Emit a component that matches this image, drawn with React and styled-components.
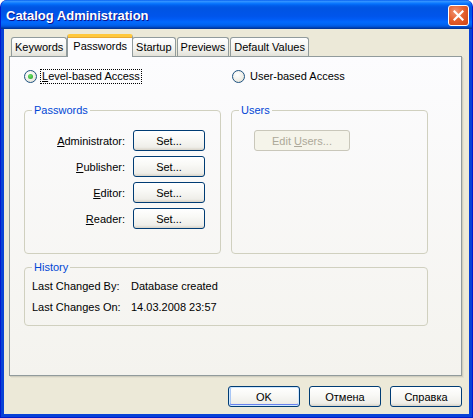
import React from 'react';
import styled, { createGlobalStyle, css } from 'styled-components';

const GlobalStyle = createGlobalStyle`
  html, body {
    margin: 0;
    padding: 0;
    background: #ffffff;
  }
  body {
    font-family: "Liberation Sans", Arial, sans-serif;
    font-size: 11px;
    color: #000;
  }
`;

const Window = styled.div`
  width: 473px;
  height: 418px;
  box-sizing: border-box;
  display: flex;
  flex-direction: column;
  background: #0842d6;
  border-radius: 7px 7px 0 0;
  border: 1px solid #0019cf;
  border-top: none;
  overflow: hidden;
`;

const TitleBar = styled.div`
  height: 29px;
  flex: none;
  display: flex;
  align-items: center;
  padding: 0 4px 0 6px;
  margin: 0 -1px;
  background: linear-gradient(to bottom,
    #0058ee 0%, #3593ff 4%, #288eff 7%, #127dff 10%, #036ffc 14%,
    #0262ee 18%, #0057e5 24%, #0054e3 30%, #0055eb 56%, #005bf5 66%,
    #026afe 76%, #0062ef 86%, #0052d6 92%, #0040ab 96%, #003092 100%);
  border-radius: 7px 7px 0 0;
`;

const Title = styled.div`
  flex: 1;
  color: #ffffff;
  font-family: "Liberation Sans", Arial, sans-serif;
  font-weight: bold;
  font-size: 13px;
  text-shadow: 1px 1px 0 #0f1089;
  padding-top: 1px;
`;

const CloseButton = styled.div`
  width: 21px;
  height: 21px;
  box-sizing: border-box;
  border: 1px solid #ffffff;
  border-radius: 3px;
  margin-top: 1px;
  display: flex;
  align-items: center;
  justify-content: center;
  background: radial-gradient(circle at 35% 30%, #f29474 0%, #e5612f 45%, #cc4214 100%);
`;

const Client = styled.div`
  flex: 1;
  margin: 0 3px 3px;
  background: #ece9d8;
  padding: 5px 7px 0 5px;
  display: flex;
  flex-direction: column;
`;

const TabRow = styled.div`
  display: flex;
  align-items: flex-end;
  height: 22px;
  padding-left: 2px;
  position: relative;
  z-index: 1;
`;

const Tab = styled.div`
  box-sizing: border-box;
  height: ${p => (p.active ? '23px' : '19px')};
  padding: 0 ${p => (p.active ? '5px' : '3px')};
  margin: ${p => (p.active ? '0 -1px -1px' : '0 1px 0 0')};
  display: flex;
  align-items: center;
  border: 1px solid #919b9c;
  border-bottom: none;
  border-radius: 3px 3px 0 0;
  background: linear-gradient(to bottom, #ffffff 0%, #f3f3ef 60%, #e3e2d9 100%);
  white-space: nowrap;
  ${p => p.active && css`
    background: #fcfcfe;
    border-top: 3px solid #ffc83c;
    box-shadow: inset 0 1px 0 #e8a830;
    padding-bottom: 2px;
    position: relative;
    z-index: 2;
  `}
`;

const Panel = styled.div`
  width: 453px;
  height: 320px;
  box-sizing: border-box;
  border: 1px solid #919b9c;
  box-shadow: 1px 1px 0 #d0cebf, 2px 2px 0 #e3e0d0;
  background: linear-gradient(to bottom, #fcfcfe 0%, #f4f3ee 100%);
  padding: 12px 0 0 14px;
  display: flex;
  flex-direction: column;
`;

const RadioRow = styled.div`
  display: flex;
  height: 15px;
  align-items: center;
`;

const RadioOption = styled.div`
  display: flex;
  align-items: center;
  width: ${p => p.width || 'auto'};
`;

const RadioCircle = styled.span`
  width: 13px;
  height: 13px;
  box-sizing: border-box;
  border-radius: 50%;
  border: 1px solid #1c5180;
  background: radial-gradient(circle at 40% 35%, #ffffff 0%, #f0efe8 55%, #dcd9c8 100%);
  display: flex;
  align-items: center;
  justify-content: center;
  margin-right: 3px;
  flex: none;

  &::after {
    content: '';
    display: ${p => (p.checked ? 'block' : 'none')};
    width: 5px;
    height: 5px;
    border-radius: 50%;
    background: radial-gradient(circle at 40% 35%, #6fe06a 0%, #21a121 100%);
  }
`;

const RadioLabel = styled.span`
  padding: 0 1px;
  border: 1px dotted ${p => (p.focused ? '#000' : 'transparent')};
  line-height: 13px;
`;

const U = styled.span`
  text-decoration: underline;
`;

const GroupsRow = styled.div`
  display: flex;
  gap: 10px;
  margin-top: 20px;
`;

const Group = styled.fieldset`
  margin: 0;
  box-sizing: border-box;
  width: ${p => p.width};
  height: ${p => p.height};
  border: 1px solid #d0d0bf;
  border-radius: 4px;
  padding: 0 7px;
  min-width: 0;
`;

const Legend = styled.legend`
  color: #0046d5;
  padding: 0 2px;
  line-height: 13px;
`;

const PasswordGrid = styled.div`
  display: grid;
  grid-template-columns: 93px 72px;
  column-gap: 8px;
  row-gap: 5px;
  margin-top: 13px;
  align-items: center;
`;

const RowLabel = styled.span`
  text-align: right;
`;

const Button = styled.button`
  box-sizing: border-box;
  width: ${p => p.width || '72px'};
  height: 21px;
  font-family: "Liberation Sans", Arial, sans-serif;
  font-size: 11px;
  color: #000;
  border: 1px solid #003c74;
  border-radius: 3px;
  background: linear-gradient(to bottom, #ffffff 0%, #f9f9f6 40%, #efeee9 85%, #d8d3c8 100%);
  padding: 0;
  ${p => p.isDefault && css`
    box-shadow: inset 0 0 0 1px #cee7ff, inset 0 -1px 0 1px #6982ee, inset 1px 0 0 1px #a8c6f5;
  `}
  ${p => p.disabled && css`
    color: #aca899;
    border-color: #c9c7ba;
    background: #f5f4ea;
  `}
`;

const UsersBody = styled.div`
  margin-top: 13px;
  padding-left: 15px;
`;

const HistoryGroup = styled(Group)`
  margin-top: 7px;
`;

const HistoryGrid = styled.div`
  display: grid;
  grid-template-columns: 99px auto;
  row-gap: 7px;
  margin-top: 5px;
  line-height: 14px;
`;

const Footer = styled.div`
  display: flex;
  justify-content: flex-end;
  gap: 9px;
  padding-top: 10px;
`;

export default function App() {
  return (
    <>
      <GlobalStyle />
      <Window>
        <TitleBar>
          <Title>Catalog Administration</Title>
          <CloseButton>
            <svg width="11" height="11" viewBox="0 0 11 11">
              <path d="M1.5 1.5 L9.5 9.5 M9.5 1.5 L1.5 9.5" stroke="#ffffff" strokeWidth="2.2" strokeLinecap="square" />
            </svg>
          </CloseButton>
        </TitleBar>
        <Client>
          <TabRow>
            <Tab>Keywords</Tab>
            <Tab active>Passwords</Tab>
            <Tab>Startup</Tab>
            <Tab>Previews</Tab>
            <Tab>Default Values</Tab>
          </TabRow>
          <Panel>
            <RadioRow>
              <RadioOption width="208px">
                <RadioCircle checked />
                <RadioLabel focused><U>L</U>evel-based Access</RadioLabel>
              </RadioOption>
              <RadioOption>
                <RadioCircle />
                <RadioLabel>User-based Access</RadioLabel>
              </RadioOption>
            </RadioRow>
            <GroupsRow>
              <Group width="197px" height="150px">
                <Legend>Passwords</Legend>
                <PasswordGrid>
                  <RowLabel><U>A</U>dministrator:</RowLabel>
                  <Button>Set...</Button>
                  <RowLabel><U>P</U>ublisher:</RowLabel>
                  <Button>Set...</Button>
                  <RowLabel><U>E</U>ditor:</RowLabel>
                  <Button>Set...</Button>
                  <RowLabel><U>R</U>eader:</RowLabel>
                  <Button>Set...</Button>
                </PasswordGrid>
              </Group>
              <Group width="197px" height="150px">
                <Legend>Users</Legend>
                <UsersBody>
                  <Button width="96px" disabled>Edit <U>U</U>sers...</Button>
                </UsersBody>
              </Group>
            </GroupsRow>
            <HistoryGroup width="404px" height="65px">
              <Legend>History</Legend>
              <HistoryGrid>
                <span>Last Changed By:</span>
                <span>Database created</span>
                <span>Last Changes On:</span>
                <span>14.03.2008 23:57</span>
              </HistoryGrid>
            </HistoryGroup>
          </Panel>
          <Footer>
            <Button isDefault>OK</Button>
            <Button>Отмена</Button>
            <Button>Справка</Button>
          </Footer>
        </Client>
      </Window>
    </>
  );
}
